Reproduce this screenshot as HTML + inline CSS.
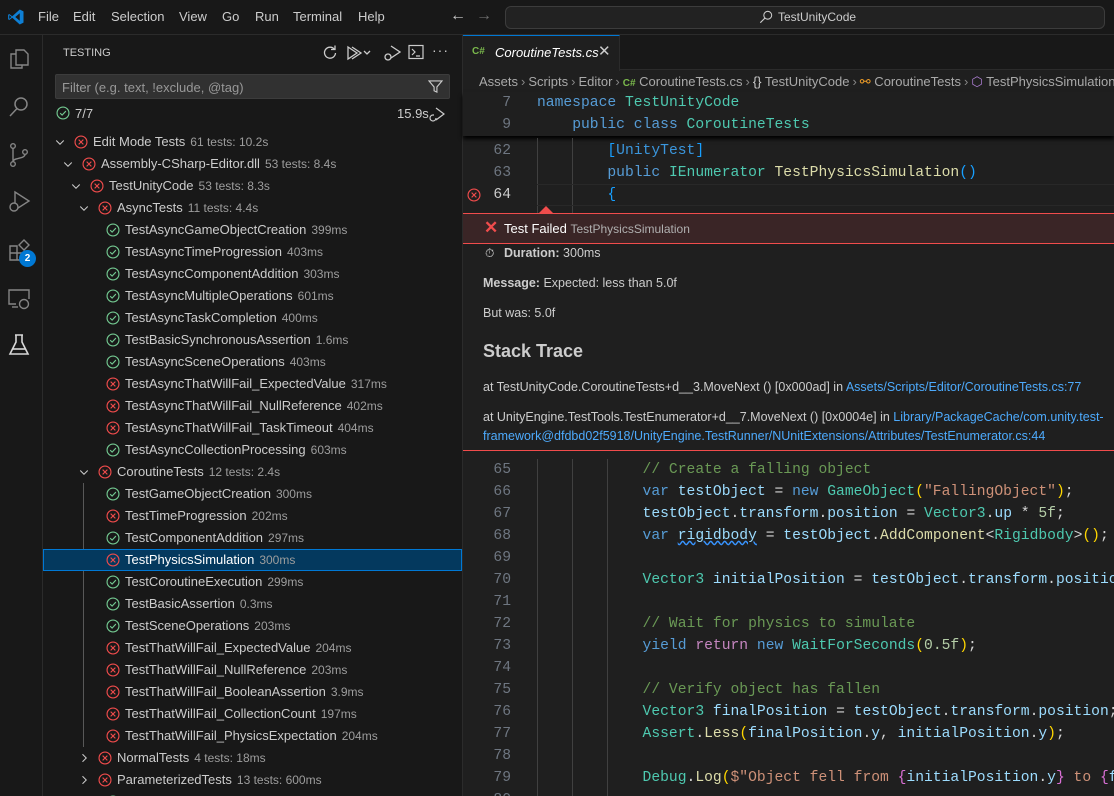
<!DOCTYPE html>
<html style="overflow:hidden;width:1114px;height:796px"><head><meta charset="utf-8"><style>
*{box-sizing:border-box;margin:0;padding:0}
body{width:1114px;height:796px;overflow:hidden;background:#1f1f1f;font-family:"Liberation Sans",sans-serif;font-size:13px;color:#cccccc;position:relative}
#wrap{position:absolute;left:0;top:0;width:1114px;height:796px;overflow:hidden}
.a{position:absolute;white-space:nowrap}
#title{left:0;top:0;width:1114px;height:35px;background:#181818;border-bottom:1px solid #2b2b2b}
.menu{top:9px;font-size:13px;color:#cccccc}
#act{left:0;top:35px;width:43px;height:761px;background:#181818;border-right:1px solid #2b2b2b}
#side{left:43px;top:35px;width:420px;height:761px;background:#181818;border-right:1px solid #2b2b2b}
.row{position:absolute;left:43px;width:419px;height:22px;line-height:22px}
.row span.t{color:#cccccc}
.row span.d{color:#9d9d9d;font-size:12px;margin-left:5px}
.ic{position:absolute;top:4px;width:14px;height:14px}
.chev{position:absolute;top:5px;width:12px;height:12px}
.ln{position:absolute;width:48px;text-align:right;left:463px;color:#6e7681;font-family:"Liberation Mono",monospace;font-size:14.67px}
.cl{position:absolute;left:537px;white-space:pre;font-family:"Liberation Mono",monospace;font-size:14.67px}
.k{color:#569cd6}.ty{color:#4ec9b0}.f{color:#dcdcaa}.v{color:#9cdcfe}.s{color:#ce9178}.c{color:#6a9955}.p{color:#c586c0}.n{color:#b5cea8}.g{color:#ffd700}.o{color:#d4d4d4}.m{color:#da70d6}.b{color:#179fff}
.guide{position:absolute;width:1px;background:#404040}
a{color:#4daafc;text-decoration:none}
.sep{color:#888;margin:0 3px}
</style></head><body><div id="wrap">
<div class="a" id="title"></div>
<svg class="a" style="left:7px;top:8px" width="18" height="18" viewBox="0 0 24 24"><path d="M17 2 L22 4.5 V19.5 L17 22 L7 13 L3 16 L1.5 15 V9 L3 8 L7 11 Z M17 7 L11 12 L17 17 Z" fill="#0e7fd4"/><path d="M3 9.5 L6 12 L3 14.5Z" fill="#181818"/></svg>
<div class="a menu" style="left:38px">File</div>
<div class="a menu" style="left:73px">Edit</div>
<div class="a menu" style="left:111px">Selection</div>
<div class="a menu" style="left:179px">View</div>
<div class="a menu" style="left:222px">Go</div>
<div class="a menu" style="left:255px">Run</div>
<div class="a menu" style="left:293px">Terminal</div>
<div class="a menu" style="left:358px">Help</div>
<div class="a" style="left:450px;top:7px;font-size:16px;color:#cccccc">←</div>
<div class="a" style="left:476px;top:7px;font-size:16px;color:#6e6e6e">→</div>
<div class="a" style="left:505px;top:6px;width:600px;height:23px;background:#222222;border:1px solid #3c3c3c;border-radius:6px"></div>
<svg class="a" style="left:759px;top:10px" width="14" height="14" viewBox="0 0 16 16"><circle cx="10" cy="6" r="4.5" fill="none" stroke="#cccccc" stroke-width="1.2"/><path d="M6.8 9.2 L1.5 14.5" stroke="#cccccc" stroke-width="1.3"/></svg>
<div class="a" style="left:778px;top:10px;font-size:12px;color:#cccccc">TestUnityCode</div>

<div class="a" id="act"></div>
<svg class="a" style="left:7px;top:47px" width="24" height="24" viewBox="0 0 24 24" fill="none" stroke="#858585" stroke-width="1.4"><path d="M9 3h8l4 4v11H9z"/><path d="M9 7H4v14h11v-3"/></svg>
<svg class="a" style="left:7px;top:95px" width="24" height="24" viewBox="0 0 24 24" fill="none" stroke="#858585" stroke-width="1.5"><circle cx="14" cy="9" r="6"/><path d="M10 13.5L3 21"/></svg>
<svg class="a" style="left:7px;top:142px" width="24" height="26" viewBox="0 0 24 26" fill="none" stroke="#858585" stroke-width="1.4"><circle cx="6" cy="4" r="2.3"/><circle cx="6" cy="22" r="2.3"/><circle cx="18" cy="10" r="2.3"/><path d="M6 6.3v13.4M18 12.3c0 5-12 3-12 7.4"/></svg>
<svg class="a" style="left:6px;top:189px" width="26" height="26" viewBox="0 0 26 26" fill="none" stroke="#858585" stroke-width="1.4"><path d="M9 3l14 9-14 9z"/><circle cx="8" cy="18" r="4" fill="#181818"/></svg>
<svg class="a" style="left:7px;top:238px" width="24" height="24" viewBox="0 0 24 24" fill="none" stroke="#858585" stroke-width="1.4"><path d="M3 8h7v7H3zM3 15h7v7H3zM10 15h7v7h-7z"/><path d="M17 2l5 5-5 5-5-5z"/></svg>
<div class="a" style="left:19px;top:250px;width:17px;height:17px;border-radius:50%;background:#0078d4;color:#fff;font-size:10px;font-weight:bold;text-align:center;line-height:17px">2</div>
<svg class="a" style="left:7px;top:286px" width="24" height="24" viewBox="0 0 24 24" fill="none" stroke="#858585" stroke-width="1.4"><path d="M9 18H2V4h20v9"/><path d="M5 21h6"/><circle cx="17" cy="18" r="4.5"/></svg>
<svg class="a" style="left:8px;top:333px" width="22" height="24" viewBox="0 0 22 24" fill="none" stroke="#d7d7d7" stroke-width="1.6"><path d="M7 2h8M8 2v7L2 21h18L14 9V2"/><path d="M4.5 16h13"/></svg>

<div class="a" id="side"></div>
<div class="a" style="left:63px;top:47px;font-size:11px;color:#cccccc">TESTING</div>
<svg class="a" style="left:322px;top:45px" width="16" height="16" viewBox="0 0 16 16" fill="none" stroke="#cccccc" stroke-width="1.3"><path d="M12.5 4.5A5.5 5.5 0 1 0 13.5 8"/><path d="M9 4.5h4v-4"/></svg>
<svg class="a" style="left:346px;top:45px" width="28" height="16" viewBox="0 0 28 16" fill="none" stroke="#cccccc" stroke-width="1.3"><path d="M2 2l9 6-9 6z"/><path d="M6 2l9 6-9 6"/><path d="M18 6l3 3 3-3"/></svg>
<svg class="a" style="left:383px;top:44px" width="18" height="18" viewBox="0 0 18 18" fill="none" stroke="#cccccc" stroke-width="1.3"><path d="M8 2l9 6-9 6"/><circle cx="5" cy="13" r="3"/></svg>
<svg class="a" style="left:408px;top:44px" width="16" height="16" viewBox="0 0 16 16" fill="none" stroke="#cccccc" stroke-width="1.2"><rect x="1" y="1.5" width="14" height="13"/><path d="M4 5l3 3-3 3M8 12h4"/></svg>
<div class="a" style="left:432px;top:42px;font-size:14px;color:#cccccc;letter-spacing:1px">···</div>
<div class="a" style="left:55px;top:74px;width:395px;height:25px;background:#313131;border:1px solid #3c3c3c;border-radius:2px"></div>
<div class="a" style="left:62px;top:80px;font-size:13px;color:#989898">Filter (e.g. text, !exclude, @tag)</div>
<svg class="a" style="left:428px;top:79px" width="15" height="15" viewBox="0 0 16 16" fill="none" stroke="#cccccc" stroke-width="1.2"><path d="M1 2h14L9.5 8.5V14L6.5 12.5V8.5z"/></svg>
<svg class="a" style="left:56px;top:106px" width="14" height="14" viewBox="0 0 16 16" fill="none" stroke="#73c991" stroke-width="1.3"><circle cx="8" cy="8" r="6.8"/><path d="M4.8 8.2l2.2 2.2 4.3-4.6"/></svg>
<div class="a" style="left:75px;top:106px;color:#cccccc">7/7</div>
<div class="a" style="left:397px;top:106px;color:#cccccc">15.9s</div>
<svg class="a" style="left:429px;top:106px" width="16" height="16" viewBox="0 0 16 16" fill="none" stroke="#cccccc" stroke-width="1.2"><path d="M7 2l8 6-8 6"/><path d="M7 12a3 3 0 1 1-3-3h1"/></svg>

<div class="guide" style="left:83px;top:483px;height:264px;background:#585858"></div>

<div class="a" style="left:43px;top:549px;width:419px;height:22px;background:#04395e;border:1px solid #0078d4"></div>
<div id="tree"></div>

<!-- editor -->
<div class="a" style="left:463px;top:35px;width:651px;height:35px;background:#181818;border-bottom:1px solid #2b2b2b"></div>
<div class="a" style="left:463px;top:35px;width:157px;height:36px;background:#1f1f1f;border-top:1px solid #0078d4;border-right:1px solid #2b2b2b"></div>
<div class="a" style="left:472px;top:46px;font-size:10px;color:#7ab94c;font-weight:bold">C#</div>
<div class="a" style="left:495px;top:45px;font-style:italic;color:#ffffff">CoroutineTests.cs</div>
<div class="a" style="left:598px;top:42px;font-size:15px;color:#cccccc">✕</div>
<div class="a" style="left:479px;top:74px;color:#a9a9a9;font-size:13px">Assets<span class="sep">›</span>Scripts<span class="sep">›</span>Editor<span class="sep">›</span><span style="color:#7ab94c;font-size:10px;font-weight:bold">C#</span> CoroutineTests.cs<span class="sep">›</span><span style="color:#cccccc">{}</span> TestUnityCode<span class="sep">›</span><span style="color:#ee9d28">⚯</span> CoroutineTests<span class="sep">›</span><span style="color:#b180d7">⬡</span> TestPhysicsSimulation</div>

<div class="a" style="left:463px;top:92px;width:651px;height:44px;background:#1f1f1f;box-shadow:0 3px 4px #000"></div>
<div class="ln" style="top:92px;line-height:22px">7</div>
<div class="cl" style="top:92px;line-height:22px"><span class="k">namespace</span> <span class="ty">TestUnityCode</span></div>
<div class="ln" style="top:114px;line-height:22px">9</div>
<div class="cl" style="top:114px;line-height:22px">    <span class="k">public</span> <span class="k">class</span> <span class="ty">CoroutineTests</span></div>

<div class="guide" style="left:537px;top:138px;height:75px"></div>
<div class="guide" style="left:572px;top:138px;height:75px"></div>
<div class="ln" style="top:140px;line-height:22px">62</div>
<div class="cl" style="top:140px;line-height:22px">        <span class="b">[</span><span style="color:#3a96dd">UnityTest</span><span class="b">]</span></div>
<div class="ln" style="top:162px;line-height:22px">63</div>
<div class="cl" style="top:162px;line-height:22px">        <span class="k">public</span> <span class="ty">IEnumerator</span> <span class="f">TestPhysicsSimulation</span><span class="b">()</span></div>
<div class="a" style="left:537px;top:184px;width:577px;height:22px;border-top:1px solid #282828;border-bottom:1px solid #282828"></div>
<svg class="a" style="left:467px;top:188px" width="14" height="14" viewBox="0 0 16 16" fill="none" stroke="#f14c4c" stroke-width="1.3"><circle cx="8" cy="8" r="6.8"/><path d="M5.3 5.3l5.4 5.4M10.7 5.3l-5.4 5.4"/></svg>
<div class="ln" style="top:184px;line-height:22px;color:#cccccc">64</div>
<div class="cl" style="top:184px;line-height:22px">        <span class="b">{</span></div>

<!-- peek -->
<div class="a" style="left:539px;top:206px;width:0;height:0;border-left:7px solid transparent;border-right:7px solid transparent;border-bottom:7px solid #f14c4c"></div>
<div class="a" style="left:463px;top:213px;width:651px;height:31px;background:#3a2526;border-top:1px solid #f14c4c;border-bottom:1px solid #f14c4c"></div>
<div class="a" style="left:484px;top:218px;color:#f14c4c;font-size:17px;font-weight:bold">✕</div>
<div class="a" style="left:504px;top:221px;color:#ffffff;font-size:13px">Test Failed <span style="color:#b0b0b0;font-size:12px">TestPhysicsSimulation</span></div>
<div class="a" style="left:463px;top:244px;width:651px;height:207px;background:#1f1f1f;border-bottom:1px solid #f14c4c"></div>
<div class="a" style="left:485px;top:246px;font-size:12px;color:#ddd">⏱</div>
<div class="a" style="left:504px;top:246px;font-size:12.5px;color:#cccccc"><b>Duration:</b> 300ms</div>
<div class="a" style="left:483px;top:276px;font-size:12.5px;color:#cccccc"><b>Message:</b> Expected: less than 5.0f</div>
<div class="a" style="left:483px;top:306px;font-size:12.5px;color:#cccccc">But was: 5.0f</div>
<div class="a" style="left:483px;top:341px;font-size:18px;font-weight:bold;color:#cccccc">Stack Trace</div>
<div class="a" style="left:483px;top:380px;font-size:12.5px;color:#cccccc">at TestUnityCode.CoroutineTests+d__3.MoveNext () [0x000ad] in <a>Assets/Scripts/Editor/CoroutineTests.cs:77</a></div>
<div class="a" style="left:483px;top:410px;font-size:12.5px;color:#cccccc">at UnityEngine.TestTools.TestEnumerator+d__7.MoveNext () [0x0004e] in <a>Library/PackageCache/com.unity.test-</a></div>
<div class="a" style="left:483px;top:429px;font-size:12.5px;color:#4daafc">framework@dfdbd02f5918/UnityEngine.TestRunner/NUnitExtensions/Attributes/TestEnumerator.cs:44</div>

<div class="guide" style="left:537px;top:459px;height:337px"></div>
<div class="guide" style="left:572px;top:459px;height:337px"></div>
<div class="guide" style="left:607px;top:459px;height:337px"></div>
<div id="code"></div>
</div>
<script>
var P='<svg class="ic" style="left:LEFTpx" viewBox="0 0 16 16" fill="none" stroke="#73c991" stroke-width="1.3"><circle cx="8" cy="8" r="6.8"/><path d="M4.8 8.2l2.2 2.2 4.3-4.6"/></svg>';
var F='<svg class="ic" style="left:LEFTpx" viewBox="0 0 16 16" fill="none" stroke="#f14c4c" stroke-width="1.3"><circle cx="8" cy="8" r="6.8"/><path d="M5.3 5.3l5.4 5.4M10.7 5.3l-5.4 5.4"/></svg>';
var CD='<svg class="chev" style="left:LEFTpx" viewBox="0 0 16 16" fill="none" stroke="#cccccc" stroke-width="1.4"><path d="M3 6l5 5 5-5"/></svg>';
var CR='<svg class="chev" style="left:LEFTpx" viewBox="0 0 16 16" fill="none" stroke="#cccccc" stroke-width="1.4"><path d="M6 3l5 5-5 5"/></svg>';
var rows=[
[0,'D','F','Edit Mode Tests','61 tests: 10.2s'],
[1,'D','F','Assembly-CSharp-Editor.dll','53 tests: 8.4s'],
[2,'D','F','TestUnityCode','53 tests: 8.3s'],
[3,'D','F','AsyncTests','11 tests: 4.4s'],
[4,'','P','TestAsyncGameObjectCreation','399ms'],
[4,'','P','TestAsyncTimeProgression','403ms'],
[4,'','P','TestAsyncComponentAddition','303ms'],
[4,'','P','TestAsyncMultipleOperations','601ms'],
[4,'','P','TestAsyncTaskCompletion','400ms'],
[4,'','P','TestBasicSynchronousAssertion','1.6ms'],
[4,'','P','TestAsyncSceneOperations','403ms'],
[4,'','F','TestAsyncThatWillFail_ExpectedValue','317ms'],
[4,'','F','TestAsyncThatWillFail_NullReference','402ms'],
[4,'','F','TestAsyncThatWillFail_TaskTimeout','404ms'],
[4,'','P','TestAsyncCollectionProcessing','603ms'],
[3,'D','F','CoroutineTests','12 tests: 2.4s'],
[4,'','P','TestGameObjectCreation','300ms'],
[4,'','F','TestTimeProgression','202ms'],
[4,'','P','TestComponentAddition','297ms'],
[4,'','F','TestPhysicsSimulation','300ms'],
[4,'','P','TestCoroutineExecution','299ms'],
[4,'','P','TestBasicAssertion','0.3ms'],
[4,'','P','TestSceneOperations','203ms'],
[4,'','F','TestThatWillFail_ExpectedValue','204ms'],
[4,'','F','TestThatWillFail_NullReference','203ms'],
[4,'','F','TestThatWillFail_BooleanAssertion','3.9ms'],
[4,'','F','TestThatWillFail_CollectionCount','197ms'],
[4,'','F','TestThatWillFail_PhysicsExpectation','204ms'],
[3,'R','F','NormalTests','4 tests: 18ms'],
[3,'R','F','ParameterizedTests','13 tests: 600ms'],
[4,'','P','','']];
var h='';
rows.forEach(function(r,i){
 var top=131+i*22, lvl=r[0];
 var chevL=11+lvl*8, icL=31+lvl*8;
 var s='<div class="row" style="top:'+top+'px">';
 if(r[1]=='D') s+=CD.replace('LEFT',chevL);
 if(r[1]=='R') s+=CR.replace('LEFT',chevL);
 s+=(r[2]=='P'?P:F).replace('LEFT',icL);
 s+='<div style="position:absolute;left:'+(icL+19)+'px;top:0"><span class="t"'+(i==19?' style="color:#fff"':'')+'>'+r[3]+'</span><span class="d">'+r[4]+'</span></div></div>';
 h+=s;
});
document.getElementById('tree').innerHTML=h;
var code=[
['65','<span class="c">// Create a falling object</span>'],
['66','<span class="k">var</span> <span class="v">testObject</span> <span class="o">=</span> <span class="k">new</span> <span class="ty">GameObject</span><span class="g">(</span><span class="s">"FallingObject"</span><span class="g">)</span><span class="o">;</span>'],
['67','<span class="v">testObject</span><span class="o">.</span><span class="v">transform</span><span class="o">.</span><span class="v">position</span> <span class="o">=</span> <span class="ty">Vector3</span><span class="o">.</span><span class="v">up</span> <span class="o">*</span> <span class="n">5f</span><span class="o">;</span>'],
['68','<span class="k">var</span> <span class="v" style="text-decoration:underline wavy #3794ff">rigidbody</span> <span class="o">=</span> <span class="v">testObject</span><span class="o">.</span><span class="f">AddComponent</span><span class="o">&lt;</span><span class="ty">Rigidbody</span><span class="o">&gt;</span><span class="g">()</span><span class="o">;</span>'],
['69',''],
['70','<span class="ty">Vector3</span> <span class="v">initialPosition</span> <span class="o">=</span> <span class="v">testObject</span><span class="o">.</span><span class="v">transform</span><span class="o">.</span><span class="v">positio</span>'],
['71',''],
['72','<span class="c">// Wait for physics to simulate</span>'],
['73','<span class="k">yield</span> <span class="p">return</span> <span class="k">new</span> <span class="ty">WaitForSeconds</span><span class="g">(</span><span class="n">0.5f</span><span class="g">)</span><span class="o">;</span>'],
['74',''],
['75','<span class="c">// Verify object has fallen</span>'],
['76','<span class="ty">Vector3</span> <span class="v">finalPosition</span> <span class="o">=</span> <span class="v">testObject</span><span class="o">.</span><span class="v">transform</span><span class="o">.</span><span class="v">position</span><span class="o">;</span>'],
['77','<span class="ty">Assert</span><span class="o">.</span><span class="f">Less</span><span class="g">(</span><span class="v">finalPosition</span><span class="o">.</span><span class="v">y</span><span class="o">,</span> <span class="v">initialPosition</span><span class="o">.</span><span class="v">y</span><span class="g">)</span><span class="o">;</span>'],
['78',''],
['79','<span class="ty">Debug</span><span class="o">.</span><span class="f">Log</span><span class="g">(</span><span class="s">$"Object fell from </span><span class="m">{</span><span class="v">initialPosition</span><span class="o">.</span><span class="v">y</span><span class="m">}</span><span class="s"> to </span><span class="m">{</span><span class="v">f</span>'],
['80','']];
var c='';
code.forEach(function(l,i){var t=459+i*22;
c+='<div class="ln" style="top:'+t+'px;line-height:22px">'+l[0]+'</div><div class="cl" style="top:'+t+'px;line-height:22px">            '+l[1]+'</div>';});
document.getElementById('code').innerHTML=c;
</script>
</body></html>
